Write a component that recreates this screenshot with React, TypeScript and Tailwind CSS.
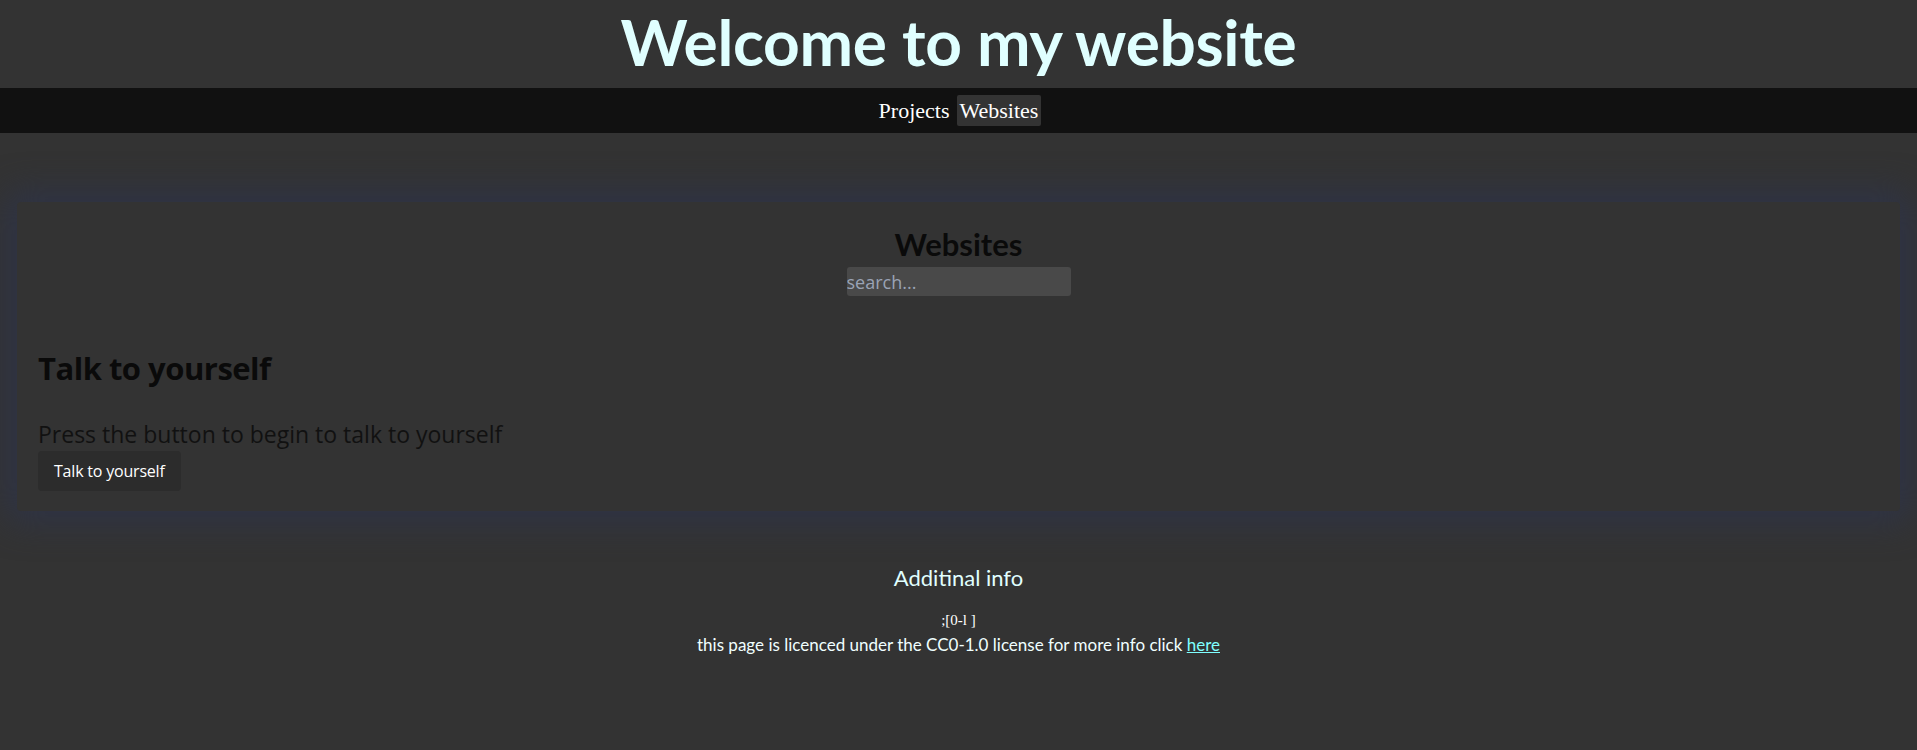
export default function App() {
  return (
    <div className="min-h-[750px] bg-[#333333] text-black" style={{ fontFamily: "Lato, 'Open Sans', sans-serif" }}>
      <header className="h-[88px] flex items-center justify-center bg-[#333333]">
        <h1 className="text-[64px] font-bold leading-none text-[#e0ffff] mt-[-4px] font-['Lato',sans-serif] tracking-[-0.3px]">Welcome to my website</h1>
      </header>
      <nav className="h-[45px] bg-[#111111] flex items-center justify-center gap-[4px] font-['Liberation_Serif',serif] text-[22px] text-white">
        <a className="px-[3px] py-[2px] leading-[27px]">Projects</a>
        <a className="px-[3px] py-[2px] leading-[27px] bg-[#333333] rounded-[2px]">Websites</a>
      </nav>
      <main className="pt-[69px] px-[17px] pb-[1px]">
        <section className="bg-[#333333] rounded-[4px] shadow-[0_0_34px_10px_rgba(46,52,72,0.95)] h-[309px] px-[21px] pt-[23px]">
          <div className="flex flex-col items-center">
            <h2 className="text-[31px] font-bold leading-[38px] text-[#0a0a0a] font-['Lato',sans-serif] mb-[4px]">Websites</h2>
            <input
              placeholder="search..."
              className="w-[224px] h-[29px] bg-[#494949] rounded-[3px] text-[18px] placeholder:text-[#9aa3b5] outline-none font-['Open_Sans',sans-serif] leading-none px-0"
            />
          </div>
          <h2 className="mt-[52px] text-[31px] font-bold leading-[40px] text-[#0a0a0a] font-['Open_Sans',sans-serif] tracking-[-0.5px]">Talk to yourself</h2>
          <p className="mt-[32px] text-[23px] leading-[28px] text-[#111111] font-['Open_Sans',sans-serif]">Press the button to begin to talk to yourself</p>
          <button className="mt-[3px] px-[16px] h-[40px] bg-[#2c2c2c] rounded-[4px] text-white text-[16px] font-['Open_Sans',sans-serif] tracking-[-0.2px]">Talk to yourself</button>
        </section>
      </main>
      <footer className="mt-[50px] flex flex-col items-center">
        <h3 className="text-[22px] leading-[32px] text-[#e0ffff] font-['Lato',sans-serif]">Additinal info</h3>
        <p className="mt-[16px] text-[15px] leading-[20px] text-white font-['Liberation_Serif',serif]">;[0-l ]</p>
        <p className="mt-[4px] text-[17px] leading-[22px] text-[#f0ffff] font-['Lato',sans-serif]">
          this page is licenced under the CC0-1.0 license for more info click <a className="underline text-[#7fffff]">here</a>
        </p>
      </footer>
    </div>
  );
}
